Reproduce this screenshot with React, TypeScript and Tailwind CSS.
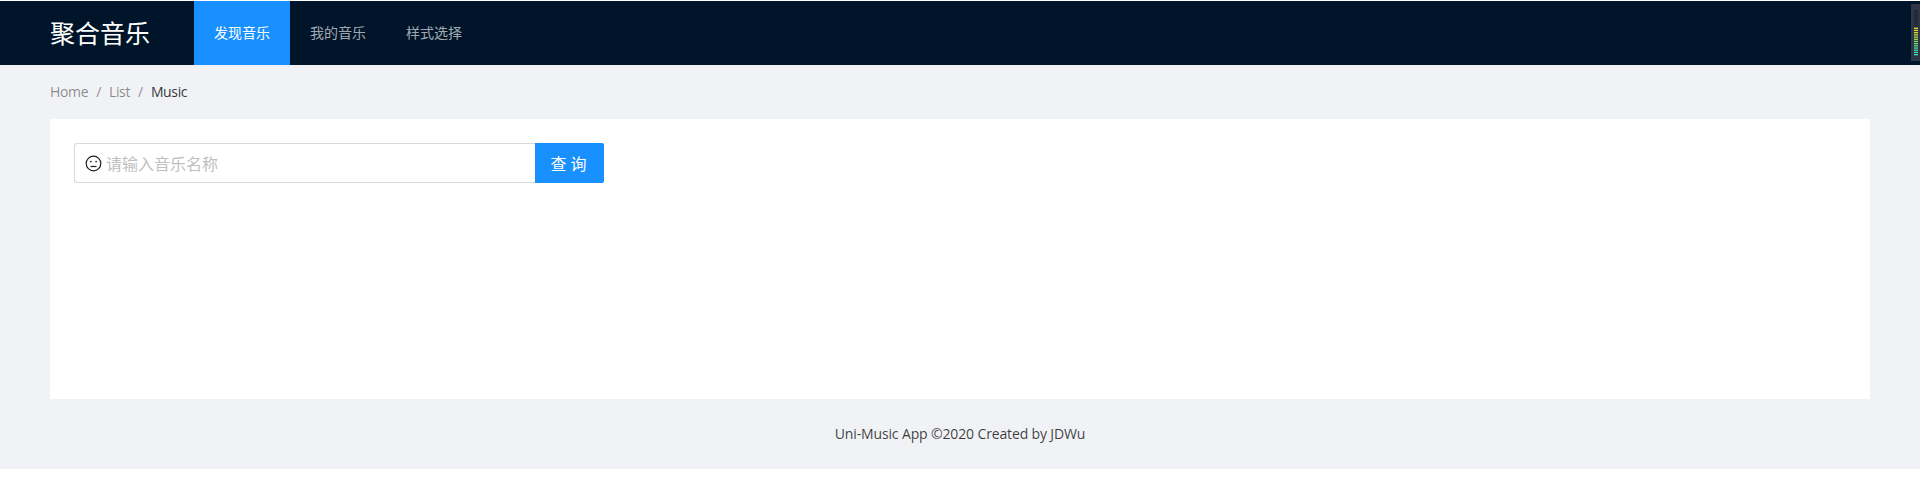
import React from "react";

const cjk = "font-['Open_Sans','Noto_Sans_CJK_SC',sans-serif]";

function Meter() {
  const colors = [
    "#1d2430", "#1d2430", "#1d2430", "#1d2430", "#1d2430", "#1d2430", "#1d2430", "#1d2430",
    "#e6d828", "#e0d430", "#d4d838", "#c0d840", "#a8dc48", "#98e050", "#80e060", "#70e070",
    "#58e080", "#48e090", "#40e0a0", "#38e0b0", "#38e0b0",
  ];
  return (
    <svg className="absolute right-0 top-[3px]" width="9" height="57" viewBox="0 0 9 57">
      <rect x="0" y="0" width="9" height="57" fill="#2e3545" />
      {colors.map((c, i) => (
        <rect key={i} x="3" y={6 + i * 2.2} width="4" height="1.3" fill={c} />
      ))}
    </svg>
  );
}

export default function App() {
  return (
    <div className={`${cjk} h-[488px] bg-white pt-px text-sm text-[rgba(0,0,0,0.65)]`}>
      <div className="flex h-[468px] flex-col bg-[#f0f2f5]">
        <header className="relative flex h-[64px] bg-[#001529] pl-[50px]">
          <div className="mr-6 w-[120px] text-[25px] leading-[64px] text-white">聚合音乐</div>
          <nav className="flex">
            <a className="bg-[#1890ff] px-5 leading-[64px] text-white">发现音乐</a>
            <a className="px-5 leading-[64px] text-[rgba(255,255,255,0.65)]">我的音乐</a>
            <a className="px-5 leading-[64px] text-[rgba(255,255,255,0.65)]">样式选择</a>
          </nav>
          <Meter />
        </header>
        <main className="flex flex-1 flex-col px-[50px]">
          <div className="flex h-[54px] items-center gap-2 tracking-[-0.35px] text-[rgba(0,0,0,0.45)]">
            <span>Home</span>
            <span>/</span>
            <span>List</span>
            <span>/</span>
            <span className="text-[rgba(0,0,0,0.8)]">Music</span>
          </div>
          <section className="h-[280px] bg-white p-6">
            <div className="flex h-[40px] w-[530px]">
              <div className="flex flex-1 items-center rounded-l-[3px] border border-r-0 border-[#d9d9d9] pl-[10px]">
                <svg width="17" height="17" viewBox="0 0 17 17" fill="none" stroke="#1f1f1f" strokeWidth="1.2" className="mr-1 mt-[1px] shrink-0">
                  <circle cx="8.5" cy="8.5" r="7.3" />
                  <path d="M5.5 11.5h6" />
                  <circle cx="5.9" cy="6.6" r="0.85" fill="#1f1f1f" stroke="none" />
                  <circle cx="11.1" cy="6.6" r="0.85" fill="#1f1f1f" stroke="none" />
                </svg>
                <span className="relative top-px text-base text-[#bfbfbf]">请输入音乐名称</span>
              </div>
              <button className="w-[69px] rounded-r-[2px] bg-[#1890ff] pt-px pl-[2px] text-base tracking-[4px] text-white">查询</button>
            </div>
          </section>
          <footer className="flex h-[70px] items-center justify-center tracking-[-0.14px] text-[rgba(0,0,0,0.75)]">
            Uni-Music App ©2020 Created by JDWu
          </footer>
        </main>
      </div>
    </div>
  );
}
